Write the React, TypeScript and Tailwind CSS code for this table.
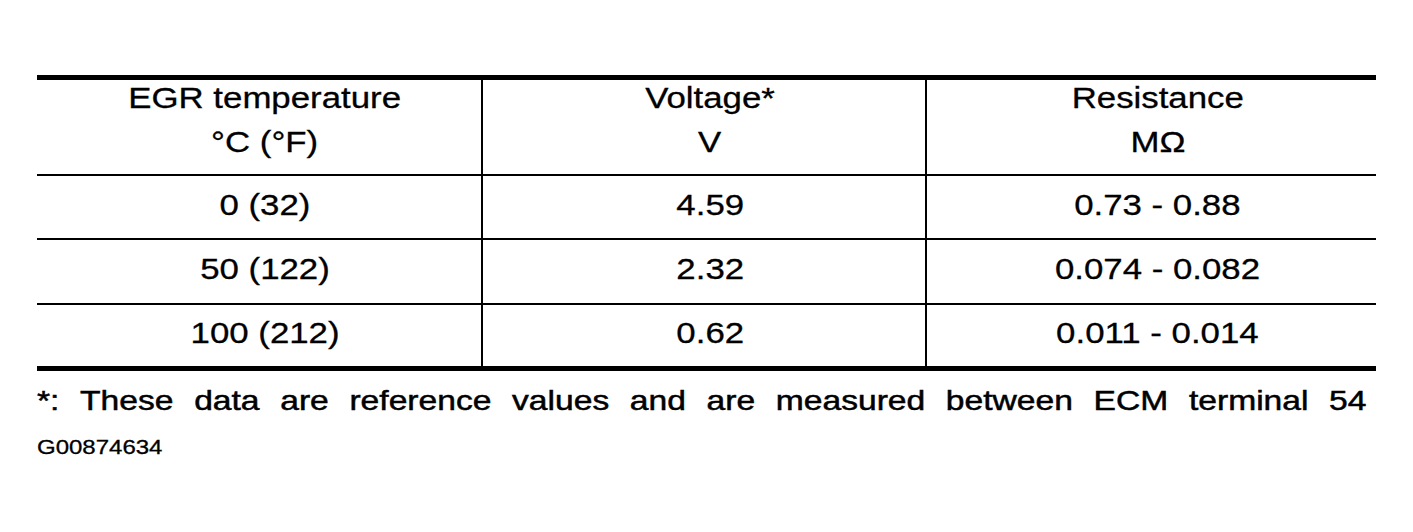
import React from "react";

const font = { fontFamily: '"Liberation Sans", Arial, Helvetica, sans-serif' };

function T({ children }: { children: React.ReactNode }) {
  return <span className="inline-block scale-x-[1.2] whitespace-pre">{children}</span>;
}

const rows = [
  ["0 (32)", "4.59", "0.73 - 0.88"],
  ["50 (122)", "2.32", "0.074 - 0.082"],
  ["100 (212)", "0.62", "0.011 - 0.014"],
];

const heights = ["h-[64px]", "h-[65px]", "h-[61px]"];

export default function App() {
  const footer =
    "*: These data are reference values and are measured between ECM terminal 54".split(" ");
  return (
    <div
      className="w-[1413px] h-[532px] bg-white text-black pt-[75px] pl-[37px] [-webkit-text-stroke:0.3px_black]"
      style={font}
    >
      <div className="w-[1339px] border-t-[5px] border-b-[5px] border-black">
        <div className="grid grid-cols-[446px_444px_449px] h-[96px] border-b-2 border-black">
          {[
            ["EGR temperature", "°C (°F)"],
            ["Voltage*", "V"],
            ["Resistance", "MΩ"],
          ].map((h, i) => (
            <div
              key={i}
              className={`flex flex-col items-center pt-[4px] pl-3 gap-[15px] text-[29px] leading-[29px] ${
                i < 2 ? "border-r-2 border-black" : ""
              }`}
            >
              <T>{h[0]}</T>
              <T>{h[1]}</T>
            </div>
          ))}
        </div>
        {rows.map((r, ri) => (
          <div
            key={ri}
            className={`grid grid-cols-[446px_444px_449px] ${heights[ri]} ${
              ri < 2 ? "border-b-2 border-black" : ""
            }`}
          >
            {r.map((c, ci) => (
              <div
                key={ci}
                className={`flex items-center justify-center pl-3 pb-1 text-[29px] leading-[29px] ${
                  ci < 2 ? "border-r-2 border-black" : ""
                }`}
              >
                <T>{c}</T>
              </div>
            ))}
          </div>
        ))}
      </div>
      <div className="mt-[16px] w-[1108px] origin-left scale-x-[1.2] flex justify-between text-[28px] leading-[28px] [-webkit-text-stroke:0.5px_black]">
        {footer.map((w, i) => (
          <span key={i}>{w}</span>
        ))}
      </div>
      <div className="mt-[22px] text-[20px] leading-[20px] origin-left scale-x-[1.2] w-fit">
        G00874634
      </div>
    </div>
  );
}
